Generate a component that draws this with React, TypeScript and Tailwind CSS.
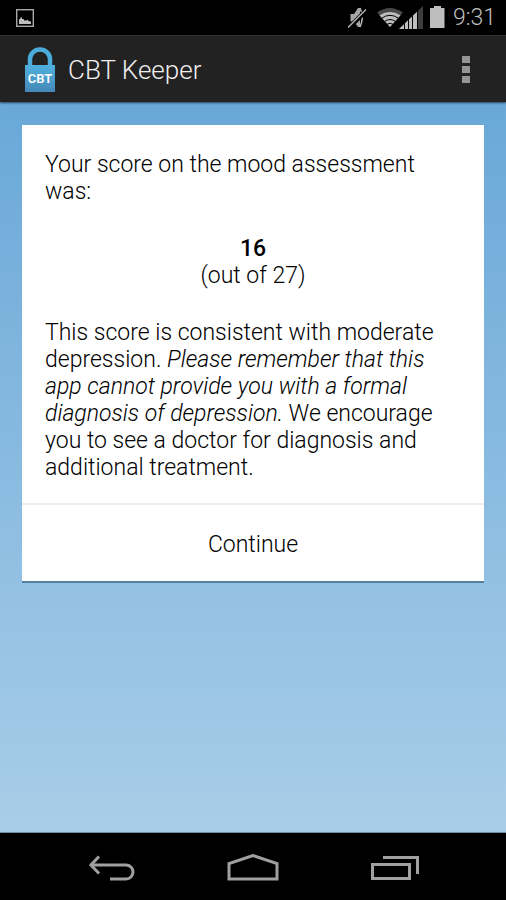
import { useState } from "react";

const StatusBar = () => {
  return (
    <div className="flex h-[35px] shrink-0 items-center justify-between bg-black pr-[10px] pl-4 text-[#bebebe]">
      <svg className="h-[18px] w-[18px]" viewBox="0 0 18 18" fill="none" aria-hidden="true">
        <rect x="0.7" y="0.7" width="16.6" height="16.6" stroke="#a8a8a8" strokeWidth="1.4" />
        <path d="M3 15v-4.500l1-.5.500-1.500H6V10h1.500l1 1.500h2l1-1 1 1.500 2.500.5V15z" fill="currentColor" />
      </svg>
      <div className="flex items-center pt-px">
        <svg className="h-6 w-[98px]" viewBox="0 0 98 24" aria-hidden="true">
          <path d="M2.500 8H6l4-6h2v19h-2l-4-5.500H2.500z" fill="#a6a6a6" />
          <path d="M12 2q4.500 9.500 0 19" fill="none" stroke="#b4b4b4" strokeWidth="1.500" />
          <path d="M1.500 23 20 4.500" stroke="#000" strokeWidth="2" />
          <path d="M0 21.500 18 3.500" stroke="#000" strokeWidth="3" />
          <path d="M0 21.500 18 3.500" stroke="#b4b4b4" strokeWidth="1.500" />
          <path d="M29 6.500Q42-2.500 55 6.500L42 21z" fill="#484848" />
          <path d="M31.500 9.300Q42 2.500 52.500 9.300L42 21z" fill="currentColor" />
          <path
            d="M33.500 12.300q8.500-6 17 0M36.500 15.500q5.500-4 11 0M39 18.300q3-2 6 0"
            fill="none"
            stroke="#000"
            strokeWidth="1"
          />
          <path d="M51 23 75 0v23z" fill="#3d3d3d" />
          <path d="M51 23 69.500 5.300V23z" fill="currentColor" />
          <path d="M56.500 14v9M60.500 10v13M64.500 6v17M69.500 2v21" stroke="#000" strokeWidth="1" />
          <path d="M82 2h4V0h7v2h3.500v20H82z" fill="currentColor" />
        </svg>
        <span className="ml-[7px] text-[23px] leading-6">9:31</span>
      </div>
    </div>
  );
};

const LockLogo = () => {
  return (
    <svg className="h-[45px] w-[30px]" viewBox="0 0 30 45" aria-hidden="true">
      <defs>
        <linearGradient id="lock-body" x1="0" y1="0" x2="0" y2="1">
          <stop offset="0" stopColor="#4fb0dd" />
          <stop offset="1" stopColor="#4488b8" />
        </linearGradient>
      </defs>
      <path d="M5 19v-7a10 9.500 0 0 1 20 0v7" fill="none" stroke="#4bacdc" strokeWidth="4.500" />
      <rect y="18" width="30" height="27" fill="url(#lock-body)" />
      <text
        x="15"
        y="36"
        textAnchor="middle"
        fill="#fff"
        fontFamily="Roboto, sans-serif"
        fontSize="13"
        fontWeight="600"
      >
        CBT
      </text>
    </svg>
  );
};

const ActionBar = () => {
  return (
    <header className="relative flex h-[67px] shrink-0 items-center border-t border-[#303030] bg-[#222222] pt-px pr-8 pl-[25px] shadow-[0_1px_2px_rgba(0,0,0,0.6)]">
      <LockLogo />
      <h1 className="ml-[13px] flex-1 text-[26px] leading-8 font-[350] text-[#f0f0f0]">CBT Keeper</h1>
      <button type="button" aria-label="More options" className="flex w-4 flex-col items-center gap-[3px] py-2">
        <span className="h-[7px] w-2 bg-[#959595]" />
        <span className="h-[7px] w-2 bg-[#959595]" />
        <span className="h-[7px] w-2 bg-[#959595]" />
      </button>
    </header>
  );
};

type ScoreCardProps = {
  score: number;
  maxScore: number;
  severity: string;
  onContinue: () => void;
};

const ScoreCard = ({ score, maxScore, severity, onContinue }: ScoreCardProps) => {
  return (
    <section className="bg-white text-[23px] leading-[27px] text-black shadow-[0_2px_0_rgba(60,100,130,0.7)]">
      <div className="flex flex-col gap-[30px] px-[23px] pt-[26px] pb-[22px]">
        <p>Your score on the mood assessment was:</p>
        <p className="text-center">
          <b className="font-medium">{score}</b>
          <br />
          (out of {maxScore})
        </p>
        <p>
          This score is consistent with {severity} depression.{" "}
          <i>Please remember that this app cannot provide you with a formal diagnosis of depression.</i> We encourage
          you to see a doctor for diagnosis and additional treatment.
        </p>
      </div>
      <button type="button" className="h-[78px] w-full border-t-2 border-[#ececec] pt-[2px]" onClick={onContinue}>
        Continue
      </button>
    </section>
  );
};

const NavigationBar = () => {
  return (
    <nav className="flex h-[67px] shrink-0 items-center justify-center gap-[90px] bg-black pt-[2px]">
      <button type="button" aria-label="Back">
        <svg className="h-7 w-[50px]" viewBox="0 0 50 28" fill="none" stroke="#a0a0a0" strokeWidth="3" aria-hidden="true">
          <path d="M3 11h36a7 7 0 0 1 0 14H23" />
          <path d="M12 2.500 4 11l8 8.500" />
        </svg>
      </button>
      <button type="button" aria-label="Home">
        <svg className="h-7 w-[52px]" viewBox="0 0 52 28" fill="none" stroke="#a0a0a0" strokeWidth="3" aria-hidden="true">
          <path d="M2 25V9.500L26 1.500l24 8V25z" />
        </svg>
      </button>
      <button type="button" aria-label="Recent apps">
        <svg className="h-7 w-[50px]" viewBox="0 0 50 28" fill="none" stroke="#a0a0a0" strokeWidth="3" aria-hidden="true">
          <path d="M3.500 10.500h37v14h-37zM14 3.500h34.500V20" />
        </svg>
      </button>
    </nav>
  );
};

export default function App() {
  const [open, setOpen] = useState(true);

  return (
    <div className="flex min-h-screen flex-col bg-black font-[Roboto,sans-serif] font-[350]">
      <StatusBar />
      <ActionBar />
      <main className="flex-1 border-b border-[#6f8da3] bg-linear-to-b from-[#69a8d8] to-[#a8cde8] px-[22px] py-[23px]">
        {open && <ScoreCard score={16} maxScore={27} severity="moderate" onContinue={() => setOpen(false)} />}
      </main>
      <NavigationBar />
    </div>
  );
}
